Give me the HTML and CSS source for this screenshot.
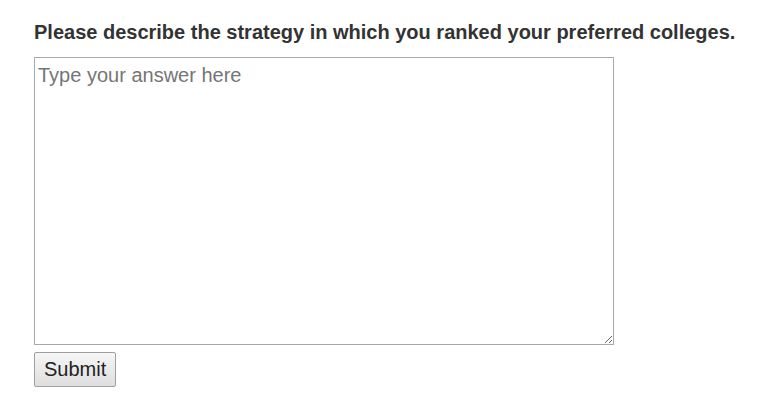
FILE: index.html
```html
<!DOCTYPE html>
<html>
<head>
<meta charset="utf-8">
<link rel="stylesheet" href="styles.css">
</head>
<body>
<div class="page">
  <h1 class="question">Please describe the strategy in which you ranked your preferred colleges.</h1>
  <form class="answer-form">
    <textarea class="answer" placeholder="Type your answer here"></textarea>
    <button type="button" class="submit">Submit</button>
  </form>
</div>
</body>
</html>
```
FILE: styles.css
```css
html, body {
  margin: 0;
  padding: 0;
  background: #fff;
}
.page {
  padding: 18px 0 0 34px;
  font-family: "Liberation Sans", Arial, sans-serif;
}
.question {
  margin: 0 0 11px 0;
  font-size: 20px;
  line-height: 28px;
  font-weight: bold;
  color: #333;
}
.answer-form {
  display: flex;
  flex-direction: column;
  align-items: flex-start;
  gap: 7px;
}
.answer {
  box-sizing: border-box;
  width: 580px;
  height: 288px;
  margin: 0;
  padding: 5px 3px 2px;
  border: 1px solid #a9a9a9;
  font-family: "Liberation Sans", Arial, sans-serif;
  font-size: 20px;
  line-height: 24px;
  color: #333;
  resize: both;
}
.answer::placeholder {
  color: #757575;
}
.submit {
  box-sizing: border-box;
  height: 35px;
  padding: 0 9px;
  margin: 0;
  font-family: "Liberation Sans", Arial, sans-serif;
  font-size: 20px;
  color: #222;
  border: 1px solid #a0a0a0;
  border-radius: 2px;
  background: linear-gradient(#f6f6f6, #dedede);
}
```
